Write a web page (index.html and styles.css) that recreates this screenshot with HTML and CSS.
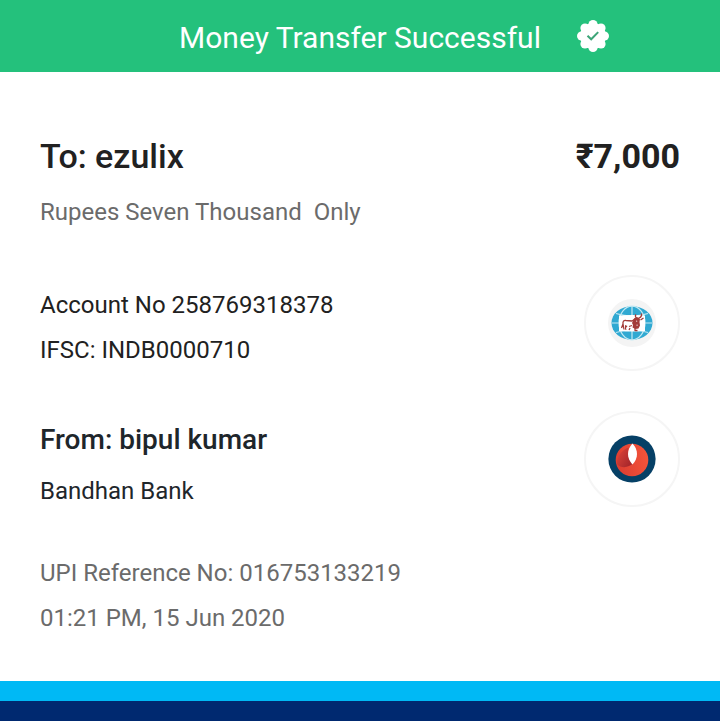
FILE: index.html
```html
<!DOCTYPE html>
<html lang="en">
<head>
<meta charset="utf-8">
<meta name="viewport" content="width=device-width, initial-scale=1">
<title>Money Transfer Successful</title>
<link rel="stylesheet" href="styles.css">
</head>
<body>
<header class="banner">
  <h1 class="banner-title">Money Transfer Successful</h1>
  <svg class="banner-badge" viewBox="0 0 32 32" aria-hidden="true">
    <g fill="#fff">
      <circle cx="16" cy="16" r="13"/>
      <circle cx="16" cy="4.600" r="4.600"/>
      <circle cx="24" cy="8" r="4.600"/>
      <circle cx="27.400" cy="16" r="4.600"/>
      <circle cx="24" cy="24" r="4.600"/>
      <circle cx="16" cy="27.400" r="4.600"/>
      <circle cx="8" cy="24" r="4.600"/>
      <circle cx="4.600" cy="16" r="4.600"/>
      <circle cx="8" cy="8" r="4.600"/>
    </g>
    <path d="M10.500 15.700l3.700 3.600 7-7.200" fill="none" stroke="#3da578" stroke-width="2"/>
  </svg>
</header>
<main class="receipt">
  <section class="payee">
    <div class="payee-line">
      <h2 class="payee-name">To: ezulix</h2>
      <strong class="amount">₹7,000</strong>
    </div>
    <p class="words">Rupees Seven Thousand&nbsp; Only</p>
  </section>
  <section class="party">
    <div class="lines">
      <p>Account No 258769318378</p>
      <p>IFSC: INDB0000710</p>
    </div>
    <div class="bank">
      <svg class="bank-logo" viewBox="0 0 48 48" aria-hidden="true">
        <circle cx="24" cy="24" r="24" fill="#f4f4f4"/>
        <ellipse cx="24" cy="24" rx="20.500" ry="16.800" fill="#30a9d2"/>
        <g fill="none" stroke="#c4e9f3" stroke-width="1.200">
          <ellipse cx="24" cy="24" rx="13" ry="16.800"/>
          <path d="M24 7.200v33.600M8 14.500q16 5 32 0M8 33.500q16-5 32 0M4 24h40"/>
        </g>
        <path d="M11 16.500q13-1 26 0v15.500q-13 1-26 0z" fill="#fff"/>
        <g fill="#a23b38">
          <path d="M26 19.500l2-1.500 2.500.500 1.500 1.500-.5 3 .500 3.500-1.500 3-3 .500-3-1.500.500-2.500-1-2z"/>
          <path d="M17 26l2.500 1-1.500 2 .500 2-1.500-.5z"/>
        </g>
        <g fill="none" stroke="#a23b38" stroke-width="1.300" stroke-linejoin="round">
          <path d="M16 30.500l-1-5.500-1.500 4M15 25q-.5-4 3-3.500l6 .5 3-2M21 27.500l3-1M22 29l-1 2M27 29v2.500h2.500"/>
          <path d="M28.500 18.500q-2-1-.5-3M31 19q3-1 2.500-4.500M32.500 21l3-2"/>
        </g>
        <path d="M28 21.500l1.500.500-1 1zM28 26l1.500-.5v1.500z" fill="#fff"/>
      </svg>
    </div>
  </section>
  <section class="party">
    <div class="lines lines-sender">
      <h2 class="sender-name">From: bipul kumar</h2>
      <p>Bandhan Bank</p>
    </div>
    <div class="bank">
      <svg class="bank-logo" viewBox="0 0 48 48" aria-hidden="true">
        <defs>
          <linearGradient id="bowl" x1="0" y1="0.600" x2="1" y2="0.400">
            <stop offset="0" stop-color="#dc3d31"/>
            <stop offset="1" stop-color="#f4543a"/>
          </linearGradient>
          <linearGradient id="shade" x1="0" y1="0" x2="0.900" y2="0.700">
            <stop offset="0" stop-color="#e2473a"/>
            <stop offset="1" stop-color="#a8282c"/>
          </linearGradient>
        </defs>
        <circle cx="24" cy="24" r="23.600" fill="#064066"/>
        <circle cx="24" cy="25" r="16.300" fill="url(#bowl)"/>
        <path d="M20.500 12.500C14 15 8.500 21 9 29C12 32.500 17 33 21 31L25 29C20 24 19.500 18 20.500 12.500z" fill="url(#shade)"/>
        <path d="M24.500 8.500C18.500 15 18.500 23 24.500 29.500C30.500 23 30.500 15 24.500 8.500z" fill="#fff"/>
      </svg>
    </div>
  </section>
  <section class="reference">
    <p>UPI Reference No: 016753133219</p>
    <p>01:21 PM, 15 Jun 2020</p>
  </section>
</main>
<footer class="stripes"></footer>
</body>
</html>
```
FILE: styles.css
```css
* {
  box-sizing: border-box;
}

body {
  margin: 0;
  min-height: 100vh;
  display: flex;
  flex-direction: column;
  background: #fff;
  color: #212121;
  font-family: Roboto, "Noto Sans", sans-serif;
  font-size: 24px;
  line-height: 32px;
}

h1,
h2,
p {
  margin: 0;
}

.banner {
  display: grid;
  grid-template-columns: 1fr auto 1fr;
  align-items: center;
  column-gap: 36px;
  padding: 14px 0;
  background: #24c17c;
  color: #fff;
}

.banner-title {
  grid-column: 2;
  padding-top: 4px;
  font-size: 30px;
  line-height: 40px;
  font-weight: 400;
}

.banner-badge {
  width: 32px;
  height: 32px;
}

.receipt {
  flex: 1;
  display: flex;
  flex-direction: column;
  gap: 40px;
  padding: 64px 40px 40px;
}

.payee-line {
  display: flex;
  justify-content: space-between;
  gap: 16px;
  margin-bottom: 20px;
  font-size: 34px;
  line-height: 40px;
}

.payee-name {
  font-size: inherit;
  font-weight: 500;
}

.amount {
  font-weight: 700;
}

.words,
.reference {
  color: #6b6b6b;
}

.payee {
  padding-bottom: 7px;
}

.party {
  display: flex;
  justify-content: space-between;
  align-items: center;
  gap: 16px;
}

.lines,
.reference {
  display: flex;
  flex-direction: column;
  gap: 13px;
}

.lines {
  padding-top: 8px;
}

.lines-sender {
  gap: 19px;
  padding-top: 13px;
  color: #1e262b;
}

.sender-name {
  font-size: 28px;
  font-weight: 500;
}

.bank {
  display: flex;
  align-items: center;
  justify-content: center;
  width: 96px;
  height: 96px;
  flex: none;
  border: 2px solid #f5f5f5;
  border-radius: 50%;
}

.bank-logo {
  width: 48px;
  height: 48px;
}

.reference {
  padding-top: 10px;
}

.stripes {
  height: 40px;
  background: #002970;
  border-top: 20px solid #00b9f5;
}
```
